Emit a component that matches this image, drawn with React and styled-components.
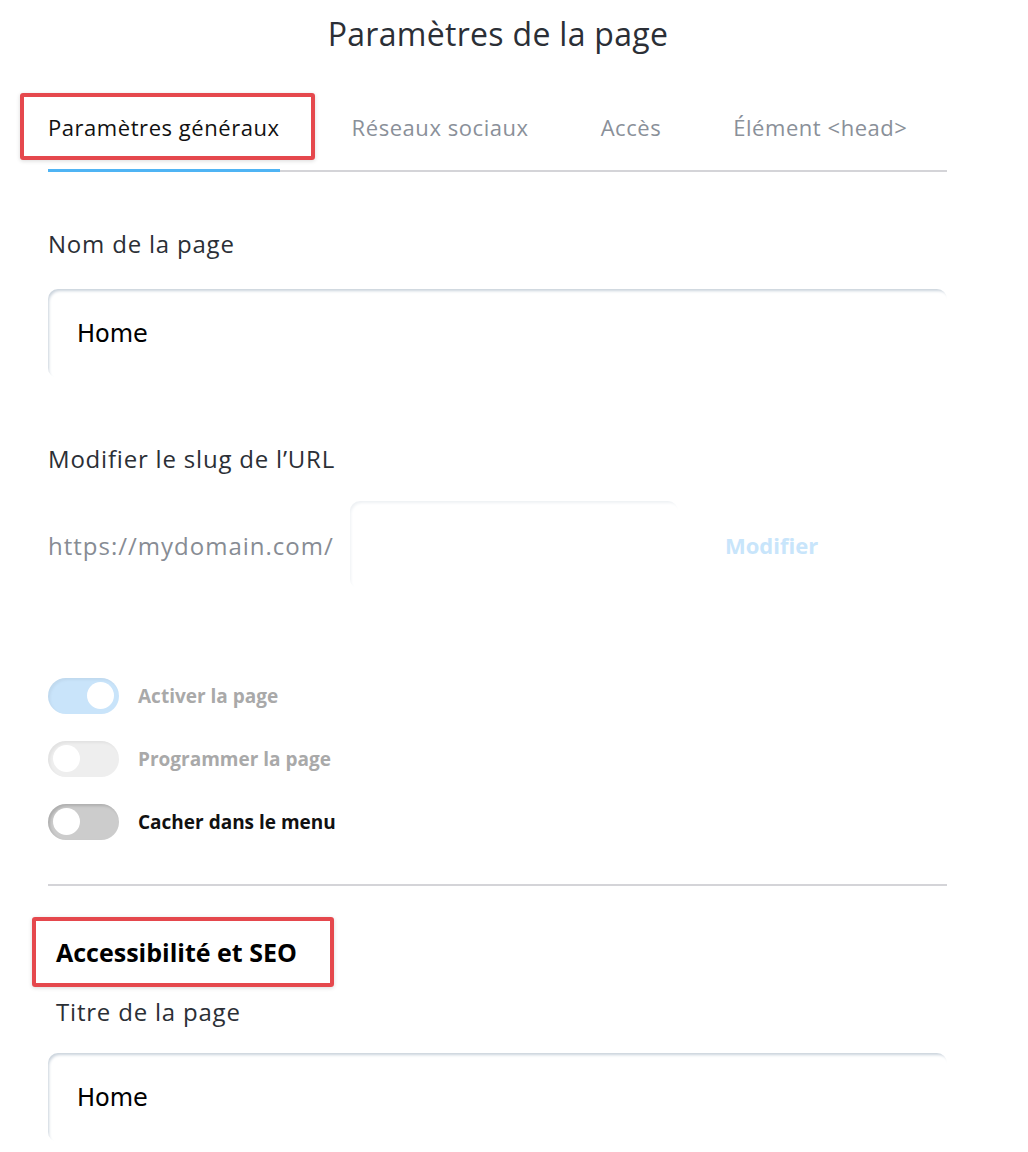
import React from 'react';
import styled, { createGlobalStyle } from 'styled-components';

const GlobalStyle = createGlobalStyle`
  body {
    margin: 0;
    background: #fff;
    font-family: "Open Sans", "Noto Sans", sans-serif;
    color: #2b2f36;
  }
`;

const Page = styled.div`
  width: 1028px;
  height: 1152px;
  overflow: hidden;
  box-sizing: border-box;
  padding: 14px 81px 0 48px;
`;

const Title = styled.h1`
  margin: 0;
  width: 900px;
  text-align: center;
  font-weight: 400;
  font-size: 32px;
  line-height: 40px;
  letter-spacing: 0.3px;
  color: #2b2f36;
`;

const Tabs = styled.div`
  display: flex;
  gap: 72px;
  margin-top: 59px;
  border-bottom: 2px solid #d4d4d8;
`;

const Tab = styled.div`
  font-size: 22px;
  line-height: 28px;
  letter-spacing: 0.55px;
  padding-bottom: 28px;
  color: ${({ active }) => (active ? '#111' : '#8a9099')};
  border-bottom: 3px solid ${({ active }) => (active ? '#4fb4f4' : 'transparent')};
  margin-bottom: -2px;
`;

const Marked = styled.span`
  position: relative;
  display: inline-block;
`;

const Highlight = styled.span`
  position: absolute;
  top: ${({ t }) => t}px;
  left: ${({ l }) => l}px;
  right: ${({ r }) => r}px;
  bottom: ${({ b }) => b}px;
  border: 4px solid #e5484d;
  border-radius: 3px;
  box-shadow: 0 1px 4px rgba(0, 0, 0, 0.15);
  pointer-events: none;
`;

const Label = styled.div`
  font-size: 24px;
  line-height: 28px;
  letter-spacing: 0.8px;
  color: #2b2f36;
  margin-top: ${({ top }) => top || 0}px;
  padding-left: ${({ indent }) => indent || 0}px;
`;

const Input = styled.div`
  box-sizing: border-box;
  flex: none;
  height: ${({ h }) => h || 89}px;
  width: ${({ w }) => (w ? `${w}px` : '100%')};
  margin-top: ${({ top }) => top || 0}px;
  border-radius: 10px;
  background: #fff;
  box-shadow: inset 2px 3px 3px -1px ${({ faint }) => (faint ? '#eef1f4' : '#cad3dc')};
  display: flex;
  align-items: center;
  padding-left: 29px;
  font-family: "DejaVu Sans", sans-serif;
  font-size: 24px;
  color: #000;
`;

const SlugRow = styled.div`
  display: flex;
  align-items: center;
  margin-top: 28px;
`;

const Prefix = styled.span`
  flex: none;
  width: 288px;
  font-size: 24px;
  letter-spacing: 1px;
  white-space: nowrap;
  color: #878c94;
  margin-right: 14px;
`;

const LinkButton = styled.span`
  font-size: 22px;
  font-weight: 700;
  color: #c8e5fb;
  margin-left: 47px;
`;

const Switches = styled.div`
  display: flex;
  flex-direction: column;
  gap: 27px;
  margin-top: 89px;
`;

const SwitchRow = styled.div`
  display: flex;
  align-items: center;
  gap: 19px;
`;

const Track = styled.div`
  position: relative;
  width: 71px;
  height: 36px;
  border-radius: 18px;
  background: ${({ on, muted }) => (on ? '#c9e4fa' : muted ? '#eeeeee' : '#cccccc')};
  box-shadow: inset 2px 2px 3px ${({ muted }) => (muted ? 'rgba(0,0,0,0.05)' : 'rgba(0,0,0,0.15)')};
`;

const Knob = styled.div`
  position: absolute;
  top: 4px;
  left: ${({ on }) => (on ? '39px' : '5px')};
  width: 27px;
  height: 27px;
  border-radius: 50%;
  background: #fff;
`;

const SwitchLabel = styled.span`
  font-size: 19px;
  font-weight: 700;
  color: ${({ muted }) => (muted ? '#a9a9a9' : '#111')};
`;

const Divider = styled.hr`
  border: none;
  border-top: 2px solid #d4d4d8;
  margin: 44px 0 0;
`;

const SectionTitle = styled.div`
  font-size: 25px;
  font-weight: 700;
  color: #000;
  margin-top: 51px;
  padding-left: 8px;
  line-height: 30px;
`;

const Switch = ({ on, muted, label }) => (
  <SwitchRow>
    <Track on={on} muted={muted}>
      <Knob on={on} />
    </Track>
    <SwitchLabel muted={muted}>{label}</SwitchLabel>
  </SwitchRow>
);

const App = () => (
  <Page>
    <GlobalStyle />
    <Title>Paramètres de la page</Title>
    <Tabs>
      <Tab active>
        <Marked>
          Paramètres généraux
          <Highlight t={-20} l={-28} r={-35} b={-19} />
        </Marked>
      </Tab>
      <Tab>Réseaux sociaux</Tab>
      <Tab>Accès</Tab>
      <Tab>Élément &lt;head&gt;</Tab>
    </Tabs>

    <Label top={58}>Nom de la page</Label>
    <Input top={31}>Home</Input>

    <Label top={67}>Modifier le slug de l’URL</Label>
    <SlugRow>
      <Prefix>https://mydomain.com/</Prefix>
      <Input w={328} h={88} faint />
      <LinkButton>Modifier</LinkButton>
    </SlugRow>

    <Switches>
      <Switch on muted label="Activer la page" />
      <Switch muted label="Programmer la page" />
      <Switch label="Cacher dans le menu" />
    </Switches>

    <Divider />

    <SectionTitle>
      <Marked>
        Accessibilité et SEO
        <Highlight t={-20} l={-24} r={-37} b={-20} />
      </Marked>
    </SectionTitle>
    <Label top={31} indent={8}>Titre de la page</Label>
    <Input top={27}>Home</Input>
  </Page>
);

export default App;
